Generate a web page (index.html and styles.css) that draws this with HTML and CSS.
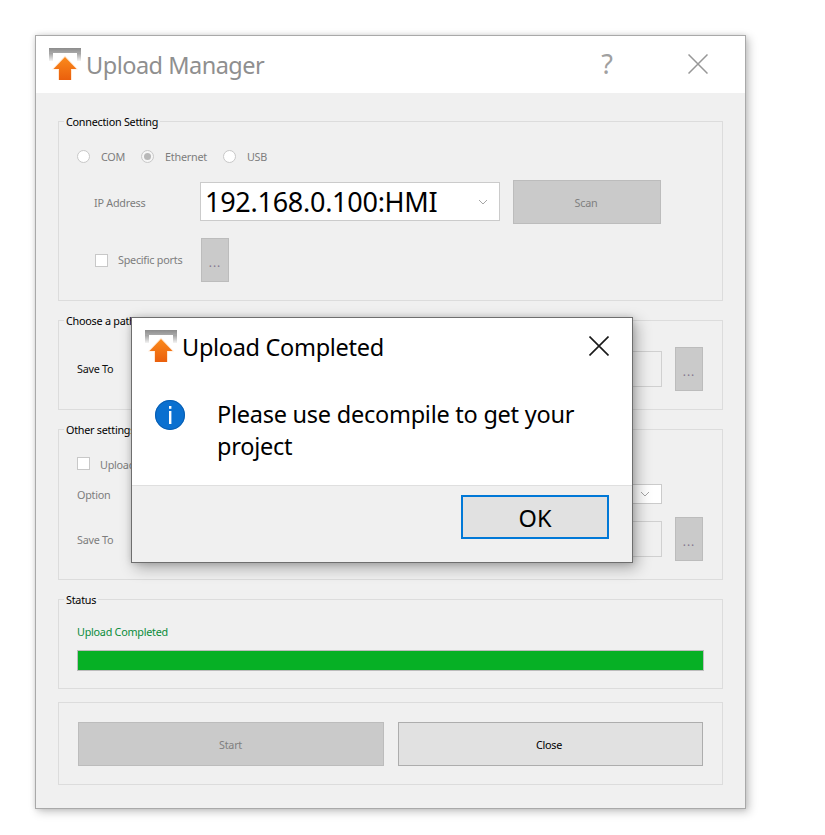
FILE: index.html
```html
<!DOCTYPE html>
<html lang="en">
<head>
<meta charset="utf-8">
<title>Upload Manager</title>
<link rel="stylesheet" href="styles.css">
</head>
<body>
<svg class="defs" width="0" height="0" aria-hidden="true">
  <defs>
    <linearGradient id="tray" x1="0" y1="0" x2="0" y2="1">
      <stop offset="0" stop-color="#8c8c8c"/>
      <stop offset="1" stop-color="#a8a8a8"/>
    </linearGradient>
    <linearGradient id="trayLeg" x1="0" y1="0" x2="0" y2="1">
      <stop offset="0" stop-color="#a0a0a0"/>
      <stop offset="1" stop-color="#f4f4f4"/>
    </linearGradient>
    <linearGradient id="arrow" x1="0" y1="0" x2="0" y2="1">
      <stop offset="0" stop-color="#fb8a1c"/>
      <stop offset="1" stop-color="#ea5f0c"/>
    </linearGradient>
    <symbol id="app-icon" viewBox="0 0 32 32">
      <rect x="0" y="0" width="32" height="5" fill="url(#tray)"/>
      <rect x="0" y="5" width="4" height="8" fill="url(#trayLeg)"/>
      <rect x="28" y="5" width="4" height="8" fill="url(#trayLeg)"/>
      <path d="M16 7.5 L29 21.5 H23 V32 H9 V21.5 H3 Z" fill="#ffd9b8" opacity=".6"/>
      <path d="M16 9 L27.5 21 H22 V32 H10 V21 H4.5 Z" fill="url(#arrow)"/>
    </symbol>
    <symbol id="chevron" viewBox="0 0 10 6">
      <path d="M1 1 L5 5 L9 1" fill="none" stroke="#a6a6a6" stroke-width="1"/>
    </symbol>
  </defs>
</svg>

<main class="window">
  <header class="titlebar">
    <svg class="app-icon"><use href="#app-icon"/></svg>
    <h1 class="title">Upload Manager</h1>
    <span class="help">?</span>
    <svg class="close" viewBox="0 0 20 20"><path d="M0.5 0.5 L19.5 19.5 M19.5 0.5 L0.5 19.5" fill="none" stroke="#979797" stroke-width="1.5"/></svg>
  </header>

  <div class="content">
    <section class="group group-connection">
      <span class="legend">Connection Setting</span>
      <div class="row radios">
        <span class="radio"></span><span class="label radio-label">COM</span>
        <span class="radio checked"></span><span class="label radio-label">Ethernet</span>
        <span class="radio"></span><span class="label radio-label">USB</span>
      </div>
      <div class="row ip-row">
        <span class="label ip-label">IP Address</span>
        <div class="combo ip-combo">
          <span class="combo-text">192.168.0.100:HMI</span>
          <svg class="chevron"><use href="#chevron"/></svg>
        </div>
        <button class="btn btn-disabled scan">Scan</button>
      </div>
      <div class="row ports-row">
        <span class="check"></span>
        <span class="label ports-label">Specific ports</span>
        <button class="btn btn-disabled dots">...</button>
      </div>
    </section>

    <section class="group group-path">
      <span class="legend">Choose a path to upload your project</span>
      <div class="row">
        <span class="label field-label dark raised">Save To</span>
        <div class="input"></div>
        <button class="btn btn-disabled dots">...</button>
      </div>
    </section>

    <section class="group group-other">
      <span class="legend">Other settings</span>
      <div class="row upload-row">
        <span class="check"></span>
        <span class="label upload-label">Upload project</span>
      </div>
      <div class="row option-row">
        <span class="label field-label">Option</span>
        <div class="combo option-combo">
          <svg class="chevron"><use href="#chevron"/></svg>
        </div>
      </div>
      <div class="row">
        <span class="label field-label">Save To</span>
        <div class="input"></div>
        <button class="btn btn-disabled dots">...</button>
      </div>
    </section>

    <section class="group group-status">
      <span class="legend">Status</span>
      <div class="status-text">Upload Completed</div>
      <div class="progress"><div class="progress-fill"></div></div>
    </section>

    <section class="group group-actions">
      <button class="btn btn-disabled action start">Start</button>
      <button class="btn action close-btn">Close</button>
    </section>
  </div>

  <div class="dialog" role="dialog">
    <div class="dialog-main">
      <div class="dialog-head">
        <svg class="app-icon"><use href="#app-icon"/></svg>
        <h2 class="dialog-title">Upload Completed</h2>
        <svg class="dialog-close" viewBox="0 0 20 20"><path d="M0.5 0.5 L19.5 19.5 M19.5 0.5 L0.5 19.5" fill="none" stroke="#1a1a1a" stroke-width="1.6"/></svg>
      </div>
      <div class="dialog-body">
        <svg class="info" viewBox="0 0 30 30">
          <circle cx="15" cy="15" r="15" fill="#0a70d0"/>
          <circle cx="15" cy="15" r="14.5" fill="none" stroke="#0b5eb0" stroke-width="1"/>
          <rect x="14" y="6" width="2.4" height="2.8" fill="#fff"/>
          <rect x="14" y="11" width="2.4" height="13" fill="#fff"/>
        </svg>
        <p class="message">Please use decompile to get your project</p>
      </div>
    </div>
    <div class="dialog-foot">
      <button class="ok">OK</button>
    </div>
  </div>
</main>
</body>
</html>
```

FILE: styles.css
```css
* {
  box-sizing: border-box;
}

html,
body {
  margin: 0;
  padding: 0;
  background: #fff;
}

body {
  font-family: "Noto Sans", "Open Sans", sans-serif;
  height: 835px;
  overflow: hidden;
}

.defs {
  position: absolute;
}

.window {
  position: relative;
  width: 711px;
  height: 774px;
  margin: 35px 0 0 35px;
  border: 1px solid #a9a9a9;
  background: #f0f0f0;
  box-shadow: 3px 3px 9px rgba(0, 0, 0, 0.22), 0 0 5px rgba(0, 0, 0, 0.12);
  display: flex;
  flex-direction: column;
}

.titlebar {
  height: 57px;
  flex: none;
  background: #fff;
  display: flex;
  align-items: flex-start;
  padding: 12px 0 0 13px;
}

.app-icon {
  width: 32px;
  height: 32px;
  flex: none;
}

.title {
  margin: 0 0 0 5px;
  font-size: 23.5px;
  letter-spacing: -0.5px;
  line-height: 34px;
  font-weight: 400;
  color: #8f8f8f;
}

.help {
  margin-left: auto;
  font-size: 27px;
  line-height: 32px;
  color: #a0a0a0;
}

.close {
  width: 20px;
  height: 20px;
  margin: 6px 37px 0 75px;
  flex: none;
}

.content {
  padding: 28px 22px 0;
  display: flex;
  flex-direction: column;
  gap: 19px;
}

.group {
  position: relative;
  width: 665px;
  border: 1px solid #dcdcdc;
}

.group-connection {
  padding: 24px 19px 18px 18px;
  display: flex;
  flex-direction: column;
  gap: 14px;
}

.group-path {
  padding: 26px 19px 18px 18px;
}

.group-other {
  padding: 23px 19px 18px 18px;
}

.group-status {
  padding: 24px 18px 17px 18px;
}

.group-actions {
  margin-top: -6px;
  padding: 19px 19px 18px;
  display: flex;
  gap: 14px;
}

.legend {
  position: absolute;
  top: -8px;
  left: 5px;
  padding: 0 2px;
  background: #f0f0f0;
  font-size: 10.8px;
  letter-spacing: -0.25px;
  line-height: 15px;
  color: #000;
  white-space: nowrap;
}

.row {
  display: flex;
  align-items: center;
}

.label {
  padding-top: 2px;
  font-size: 10.8px;
  letter-spacing: -0.25px;
  line-height: 16px;
  color: #7d7d7d;
  white-space: nowrap;
}

.raised {
  padding-top: 0;
}

.dark {
  color: #111;
}

.radios {
  height: 20px;
}

.radio {
  width: 13px;
  height: 13px;
  flex: none;
  border: 1px solid #c8c8c8;
  border-radius: 50%;
  background: #fff;
  display: flex;
  align-items: center;
  justify-content: center;
}

.radio.checked {
  background: #f6f6f6;
}

.radio.checked::after {
  content: "";
  width: 7px;
  height: 7px;
  border-radius: 50%;
  background: #b8b8b8;
}

.radio-label {
  margin-left: 11px;
  margin-right: 16px;
}

.ip-row {
  padding-left: 17px;
}

.ip-label {
  width: 106px;
  flex: none;
}

.combo {
  display: flex;
  align-items: center;
  background: #fff;
  border: 1px solid #cbcbcb;
}

.ip-combo {
  width: 300px;
  height: 39px;
  align-self: flex-start;
  margin-top: 2px;
  padding: 0 11px 0 4px;
}

.combo-text {
  font-size: 27px;
  letter-spacing: -0.27px;
  line-height: 37px;
  color: #000;
  white-space: nowrap;
}

.chevron {
  width: 10px;
  height: 6px;
  margin-left: auto;
  flex: none;
}

.btn {
  font-family: inherit;
  font-size: 10.8px;
  letter-spacing: -0.25px;
  line-height: 16px;
  padding: 2px 0 0;
  border: 1px solid #adadad;
  background: #e1e1e1;
  color: #000;
}

.btn-disabled {
  border-color: #bcbcbc;
  background: #cacaca;
  color: #7f7f7f;
}

.scan {
  width: 148px;
  height: 44px;
  margin-left: 13px;
  padding-right: 2px;
  flex: none;
}

.ports-row {
  padding-left: 18px;
}

.ports-row .label {
  padding-top: 0;
}

.check {
  width: 13px;
  height: 13px;
  flex: none;
  border: 1px solid #c8c8c8;
  background: #fff;
}

.ports-label {
  width: 83px;
  flex: none;
  margin-left: 10px;
}

.dots {
  width: 28px;
  height: 44px;
  flex: none;
  letter-spacing: 1px;
  font-size: 12px;
  padding-top: 6px;
  color: #85788f;
}

.field-label {
  width: 123px;
  flex: none;
}

.input {
  flex: 1;
  height: 36px;
  margin-right: 13px;
  border: 1px solid #d0d0d0;
  background: #f0f0f0;
}

.upload-row {
  height: 21px;
}

.upload-label {
  margin-left: 10px;
}

.option-row {
  height: 20px;
  margin: 10px 0 13px;
}

.option-combo {
  flex: 1;
  height: 20px;
  margin-right: 41px;
  padding-right: 11px;
}

.status-text {
  font-size: 10.8px;
  letter-spacing: -0.25px;
  line-height: 16px;
  color: #0a8c3a;
}

.progress {
  height: 21px;
  margin-top: 10px;
  border: 1px solid #bcbcbc;
  background: #e6e6e6;
}

.progress-fill {
  height: 100%;
  background: #06b025;
}

.action {
  height: 44px;
  flex: none;
  padding-right: 3px;
}

.start {
  width: 306px;
  padding-right: 1px;
}

.close-btn {
  width: 305px;
}

.dialog {
  position: absolute;
  left: 95px;
  top: 281px;
  width: 502px;
  height: 246px;
  border: 1px solid #6e6e6e;
  background: #f0f0f0;
  box-shadow: 4px 5px 14px rgba(0, 0, 0, 0.3), 0 0 6px rgba(0, 0, 0, 0.15);
  display: flex;
  flex-direction: column;
}

.dialog-main {
  height: 168px;
  flex: none;
  background: #fff;
  border-bottom: 1px solid #dfdfdf;
}

.dialog-head {
  display: flex;
  align-items: flex-start;
  padding: 12px 0 0 13px;
}

.dialog-title {
  margin: 0 0 0 5px;
  font-size: 23.5px;
  letter-spacing: -0.3px;
  line-height: 34px;
  font-weight: 400;
  color: #000;
}

.dialog-close {
  width: 20px;
  height: 20px;
  margin: 6px 23px 0 auto;
  flex: none;
}

.dialog-body {
  display: flex;
  align-items: flex-start;
  padding: 34px 0 0 23px;
}

.info {
  width: 30px;
  height: 30px;
  flex: none;
  margin-top: 2px;
}

.message {
  width: 374px;
  margin: 0 0 0 32px;
  font-size: 23.5px;
  letter-spacing: -0.25px;
  line-height: 32px;
  color: #000;
}

.dialog-foot {
  display: flex;
  justify-content: flex-end;
  padding: 9px 23px 0 0;
}

.ok {
  width: 148px;
  height: 44px;
  padding: 2px 0 0;
  font-family: inherit;
  font-size: 23.5px;
  color: #000;
  background: #e1e1e1;
  border: 2px solid #0078d7;
}
```
